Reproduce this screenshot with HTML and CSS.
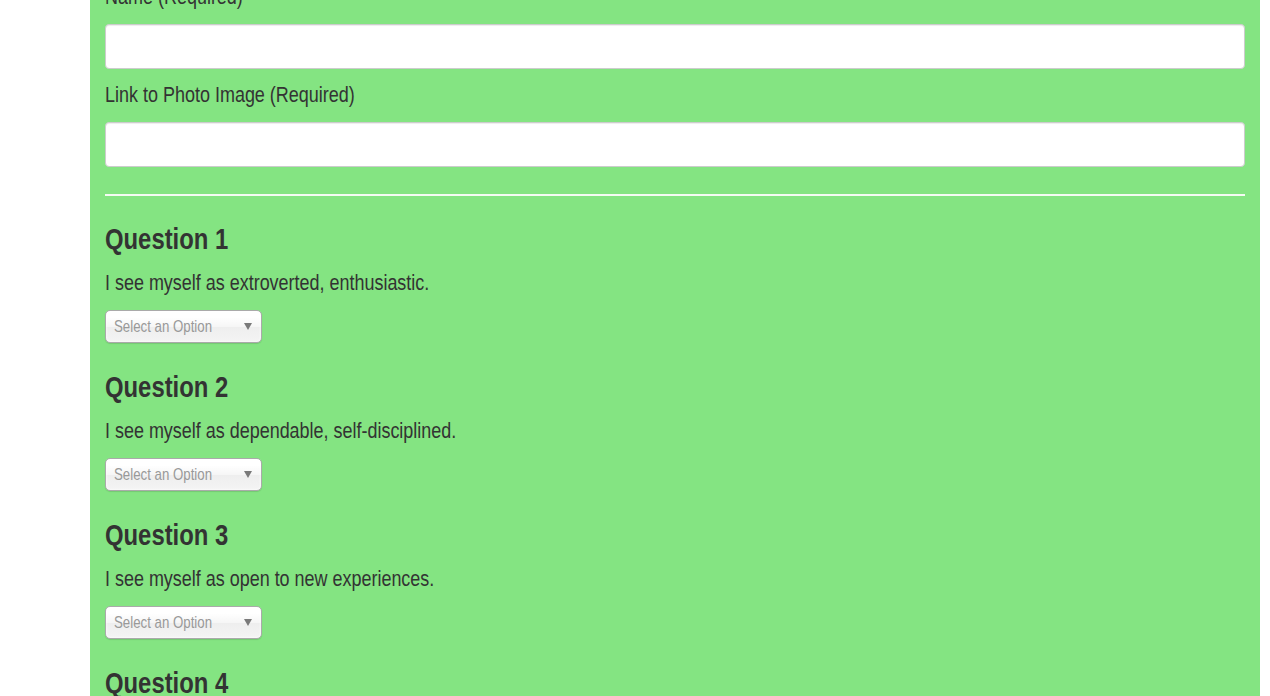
FILE: index.html
```html
<!DOCTYPE html>
<html lang="en">
<head>
<meta charset="utf-8">
<title>Survey</title>
<link rel="stylesheet" href="styles.css">
</head>
<body>
<main class="panel">
  <form class="form">
    <div class="field">
      <label class="field-label" for="name">Name (Required)</label>
      <input class="text-input" id="name" type="text">
    </div>
    <div class="field">
      <label class="field-label" for="photo">Link to Photo Image (Required)</label>
      <input class="text-input" id="photo" type="text">
    </div>
    <hr class="divider">
    <section class="question">
      <h3 class="question-title">Question 1</h3>
      <p class="question-text">I see myself as extroverted, enthusiastic.</p>
      <div class="chosen"><span class="chosen-text">Select an Option</span><span class="chosen-arrow"></span></div>
    </section>
    <section class="question">
      <h3 class="question-title">Question 2</h3>
      <p class="question-text">I see myself as dependable, self-disciplined.</p>
      <div class="chosen"><span class="chosen-text">Select an Option</span><span class="chosen-arrow"></span></div>
    </section>
    <section class="question">
      <h3 class="question-title">Question 3</h3>
      <p class="question-text">I see myself as open to new experiences.</p>
      <div class="chosen"><span class="chosen-text">Select an Option</span><span class="chosen-arrow"></span></div>
    </section>
    <section class="question">
      <h3 class="question-title">Question 4</h3>
    </section>
  </form>
</main>
</body>
</html>
```

FILE: styles.css
```css
html, body {
  margin: 0;
  padding: 0;
  background: #ffffff;
  height: 100%;
  overflow: hidden;
}

body {
  font-family: "Liberation Sans", Arial, sans-serif;
  color: #333333;
}

.panel {
  margin: 0 10px 0 90px;
  padding: 0 15px 40px;
  background: #84e482;
  min-height: 800px;
}

.form {
  display: flex;
  flex-direction: column;
  margin-top: -16px;
}

.field {
  display: flex;
  flex-direction: column;
  align-items: flex-start;
  margin-bottom: 13px;
}

.field-label {
  font-size: 22px;
  line-height: 26px;
  margin-bottom: 14px;
  color: #333333;
  transform: scaleX(0.817);
  transform-origin: left center;
}

.text-input {
  box-sizing: border-box;
  height: 45px;
  width: 100%;
  margin: 0;
  background: #ffffff;
  border: 1px solid #cccccc;
  border-radius: 4px;
  box-shadow: inset 0 1px 1px rgba(0, 0, 0, 0.075);
  font: inherit;
}

.divider {
  margin: 14px 0 26px;
  border: 0;
  border-top: 2px solid #f4fbf3;
  height: 0;
}

.question {
  display: flex;
  flex-direction: column;
  align-items: flex-start;
  margin-bottom: 27px;
}

.question-title {
  margin: 0 0 14px;
  font-size: 30px;
  line-height: 34px;
  font-weight: bold;
  color: #333333;
  transform: scaleX(0.795);
  transform-origin: left center;
}

.question-text {
  margin: 0 0 14px;
  font-size: 22px;
  line-height: 26px;
  color: #333333;
  transform: scaleX(0.816);
  transform-origin: left center;
}

.chosen {
  box-sizing: border-box;
  width: 157px;
  height: 33px;
  display: flex;
  align-items: center;
  justify-content: space-between;
  padding: 0 9px 0 8px;
  border: 1px solid #aaaaaa;
  border-radius: 5px;
  background: linear-gradient(#ffffff 20%, #f6f6f6 50%, #eeeeee 52%, #f4f4f4 100%);
  box-shadow: inset 0 0 3px #ffffff, 0 1px 1px rgba(0, 0, 0, 0.12);
}

.chosen-text {
  font-size: 17px;
  line-height: 31px;
  color: #999999;
  transform: scaleX(0.78);
  transform-origin: left center;
}

.chosen-arrow {
  width: 0;
  height: 0;
  border-left: 4px solid transparent;
  border-right: 4px solid transparent;
  border-top: 7px solid #7a7a7a;
}
```
